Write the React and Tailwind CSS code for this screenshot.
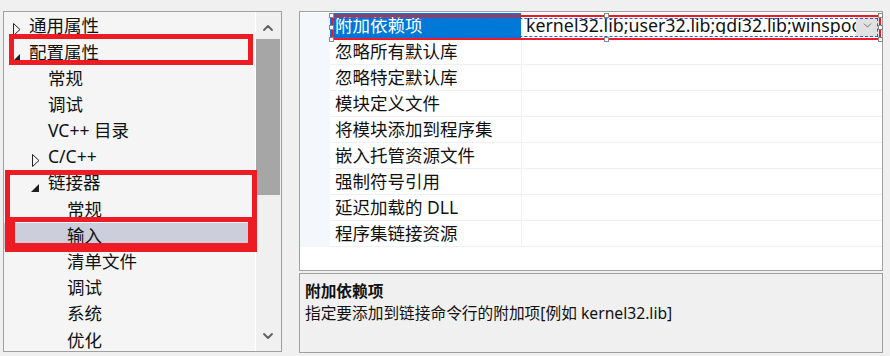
import { ChevronUp, ChevronDown } from 'lucide-react';

const FONT = { fontFamily: '"Noto Sans", "Noto Sans CJK SC", sans-serif' };

const tree = [
  { label: '通用属性', level: 0, arrow: 'closed' },
  { label: '配置属性', level: 0, arrow: 'open' },
  { label: '常规', level: 1 },
  { label: '调试', level: 1 },
  { label: 'VC++ 目录', level: 1 },
  { label: 'C/C++', level: 1, arrow: 'closed' },
  { label: '链接器', level: 1, arrow: 'open' },
  { label: '常规', level: 2 },
  { label: '输入', level: 2, selected: true },
  { label: '清单文件', level: 2 },
  { label: '调试', level: 2 },
  { label: '系统', level: 2 },
  { label: '优化', level: 2 },
];

const props = [
  '附加依赖项',
  '忽略所有默认库',
  '忽略特定默认库',
  '模块定义文件',
  '将模块添加到程序集',
  '嵌入托管资源文件',
  '强制符号引用',
  '延迟加载的 DLL',
  '程序集链接资源',
];

const indent = ['pl-[25px]', 'pl-[44px]', 'pl-[63px]'];

function Arrow({ type }) {
  if (type === 'closed') {
    return (
      <svg width="8" height="13" viewBox="0 0 8 13" className="absolute -left-[16px] top-[6px]">
        <path d="M0.5 0.5 L7 6.5 L0.5 12.5 Z" fill="none" stroke="#222" strokeWidth="1" />
      </svg>
    );
  }
  return (
    <svg width="8" height="8" viewBox="0 0 8 8" className="absolute -left-[17px] top-[10px]">
      <path d="M8 0 L8 8 L0 8 Z" fill="#1e1e1e" />
    </svg>
  );
}

function Handle({ className }) {
  return <div className={`absolute w-[5px] h-[5px] bg-white border border-[#888] ${className}`} />;
}

export default function App() {
  return (
    <div className="relative w-[890px] h-[356px] bg-[#f0f0f0] overflow-hidden text-[#111]" style={FONT}>
      <div className="flex pl-[3px] pt-[11px] gap-[17px]">
        {/* tree */}
        <div className="w-[279px] h-[341px] border border-[#a0a0a0] bg-[#f5f5f5] flex">
          <div className="flex-1 pt-[1px]">
            {tree.map((t, i) => (
              <div
                key={i}
                className={`h-[26.2px] flex items-center text-[17.5px] leading-none ${t.selected ? 'bg-[#cccedb]' : ''} ${indent[t.level]}`}
              >
                <span className="relative">
                  {t.arrow && <Arrow type={t.arrow} />}
                  {t.label}
                </span>
              </div>
            ))}
          </div>
          <div className="w-[26px] bg-[#f0f0f0] border-l border-white flex flex-col">
            <div className="h-[27px] flex items-center justify-center pr-[2px] pt-[5px]">
              <ChevronUp size={16} strokeWidth={2.8} color="#606060" />
            </div>
            <div className="h-[156px] w-[24px] bg-[#a6a6a6]" />
            <div className="flex-1" />
            <div className="h-[26px] flex items-center justify-center pr-[2px] pb-[4px]">
              <ChevronDown size={16} strokeWidth={2.8} color="#606060" />
            </div>
          </div>
        </div>

        {/* right column */}
        <div className="w-[584px] flex flex-col gap-[2px]">
          <div className="relative h-[260px] border border-[#a0a0a0] bg-white pt-[1px]">
            {props.map((p, i) => (
              <div key={i} className="flex h-[26px]">
                <div className="w-[30px] bg-[#f4f7fb]" />
                <div
                  className={`w-[192px] border-r border-b border-[#edf1f7] pl-[5px] flex items-center text-[17.5px] leading-none ${i === 0 ? 'bg-[#0078d7] text-white' : ''}`}
                >
                  {p}
                </div>
                <div className="flex-1 min-w-0 border-b border-[#edf1f7] pl-[4px] flex items-center text-[17.8px] leading-none whitespace-nowrap">
                  {i === 0 && (
                    <>
                      <span className="flex-1 min-w-0 overflow-hidden">kernel32.lib;user32.lib;gdi32.lib;winspool.lib</span>
                      <span className="shrink-0 w-[23px] h-[22px] bg-[#e1e1e1] flex items-center justify-center mr-[3px]">
                        <ChevronDown size={13} strokeWidth={1.5} color="#555" />
                      </span>
                    </>
                  )}
                </div>
              </div>
            ))}
          </div>
          <div className="h-[80px] border border-[#a0a0a0] bg-[#f0f0f0] pl-[5px] pt-[6px] text-[15.7px]">
            <div className="font-bold leading-[22px]">附加依赖项</div>
            <div className="leading-[22px]">指定要添加到链接命令行的附加项[例如 kernel32.lib]</div>
          </div>
        </div>
      </div>

      {/* annotation boxes */}
      <div className="absolute left-[9px] top-[34px] w-[244px] h-[31px] border-[5px] border-[#ed1c24]" />
      <div className="absolute left-[5px] top-[170px] w-[252px] h-[52px] border-[5px] border-[#ed1c24]" />
      <div className="absolute left-[5px] top-[217px] w-[252px] h-[35px] border-t-[5px] border-l-[10px] border-r-[9px] border-b-[9px] border-[#ed1c24]" />

      <div className="absolute left-[331px] top-[15px] w-[550px] h-[25px] border-2 border-[#ed1c24]">
        <div className="absolute inset-[1px] border border-dashed border-[#2a5bd7]" />
      </div>
      <Handle className="left-[329px] top-[13px]" />
      <Handle className="left-[329px] top-[25px]" />
      <Handle className="left-[329px] top-[37px]" />
      <Handle className="left-[604px] top-[13px]" />
      <Handle className="left-[604px] top-[37px]" />
      <Handle className="left-[878px] top-[13px]" />
      <Handle className="left-[878px] top-[25px]" />
      <Handle className="left-[878px] top-[37px]" />
    </div>
  );
}
